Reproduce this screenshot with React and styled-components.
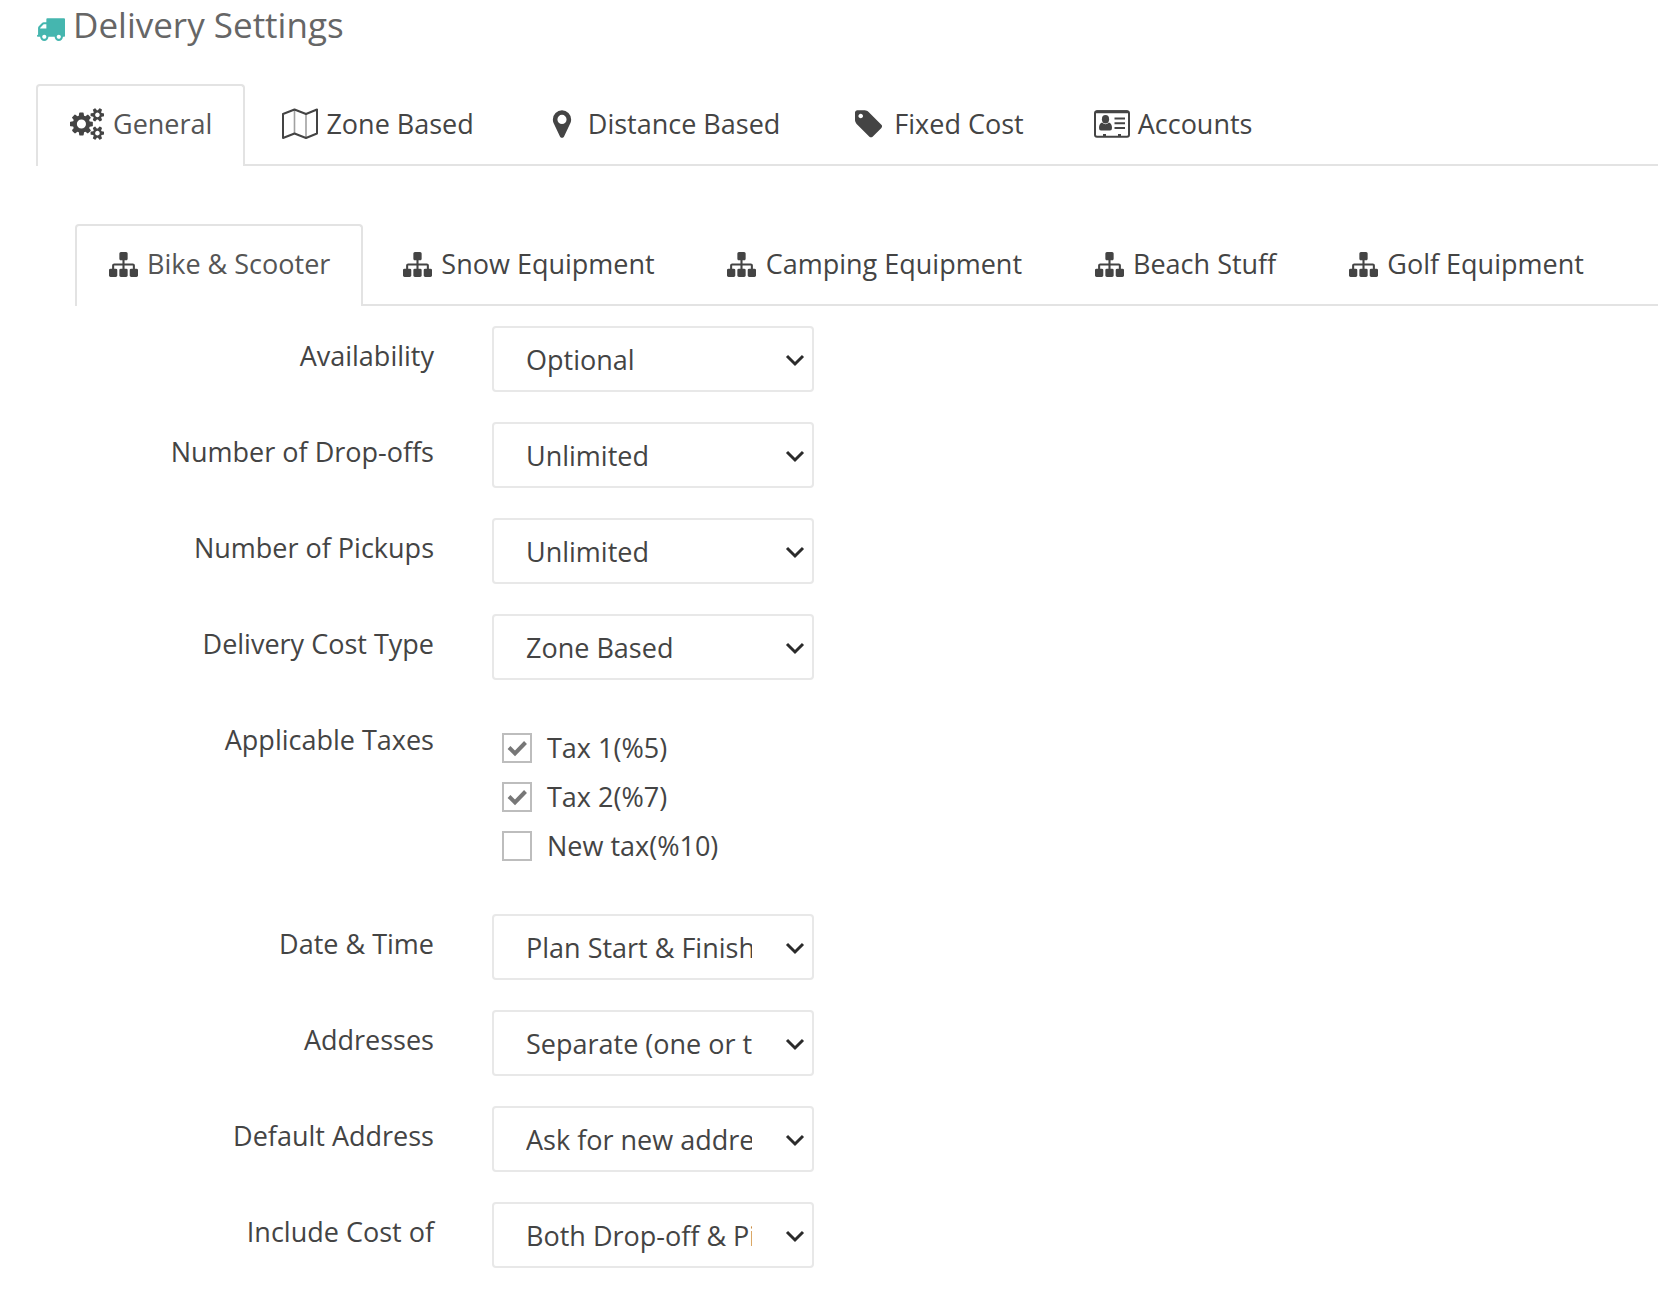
import React, { useState } from "react";
import styled, { createGlobalStyle } from "styled-components";

const theme = {
  teal: "#45b6af",
  title: "#666",
  text: "#444",
  active: "#555",
  line: "#e3e3e3",
  input: "#e8e8e8",
  check: "#bdbdbd"
};

const GlobalStyle = createGlobalStyle`
  * {
    box-sizing: border-box;
  }
  body {
    margin: 0;
    background: #fff;
    color: ${theme.text};
    font-family: "Open Sans", "Noto Sans", sans-serif;
    font-size: 27px;
    line-height: 40px;
  }
`;

const Page = styled.main`
  padding: 0 0 44px 36px;
  overflow-x: hidden;
`;

const Title = styled.h1`
  display: flex;
  align-items: center;
  gap: 8px;
  margin: 0 0 34px;
  color: ${theme.title};
  font-size: 35px;
  font-weight: 400;
  line-height: 50px;
`;

const TitleIcon = styled.svg`
  width: 29px;
  height: 29px;
  margin-top: 6px;
  fill: ${theme.teal};
`;

const TabList = styled.div`
  display: flex;
  gap: ${props => (props.$wide ? 4 : 6)}px;
  border-bottom: 2px solid ${theme.line};
`;

const Tab = styled.button`
  display: flex;
  align-items: center;
  gap: ${props => (props.$wide ? 8 : 9)}px;
  flex: none;
  height: 82px;
  margin: 0 0 -2px;
  padding: 0 31px 5px;
  border: 2px solid ${props => (props.$active ? theme.line : "transparent")};
  border-bottom: 0;
  border-radius: 4px 4px 0 0;
  background: ${props => (props.$active ? "#fff" : "transparent")};
  color: ${props => (props.$active ? theme.active : theme.text)};
  font: inherit;
  white-space: nowrap;
  cursor: pointer;
`;

const IconSlot = styled.span`
  display: flex;
  justify-content: center;
  width: ${props => (props.$wide ? 36 : 30)}px;
  padding-top: ${props => (props.$wide ? 0 : 2)}px;

  svg {
    height: ${props => (props.$wide ? 32 : 29)}px;
  }
`;

const Glyph = styled.svg`
  flex: none;
  fill: ${theme.text};
`;

const Panel = styled.section`
  padding: 58px 0 0 39px;
`;

const Form = styled.form`
  display: grid;
  gap: 30px;
  padding-top: 20px;
`;

const Row = styled.div`
  display: grid;
  grid-template-columns: 359px 322px;
  column-gap: 58px;
  align-items: start;
`;

const Label = styled.label`
  padding-top: 10px;
  text-align: right;
`;

const SelectBox = styled.div`
  position: relative;
`;

const Select = styled.select`
  appearance: none;
  display: block;
  width: 100%;
  height: 66px;
  padding: 2px 60px 0 32px;
  border: 2px solid ${theme.input};
  border-radius: 4px;
  background: #fff;
  color: ${theme.text};
  font: inherit;
`;

const Chevron = styled.svg`
  position: absolute;
  top: 27px;
  right: 9px;
  width: 20px;
  height: 14px;
  fill: none;
  stroke: #2b2b2b;
  stroke-width: 3;
  pointer-events: none;
`;

const Checks = styled.div`
  display: grid;
  gap: 9px;
  height: 174px;
  align-content: start;
  padding: 18px 0 0 10px;
`;

const CheckLabel = styled.label`
  display: flex;
  align-items: center;
  gap: 15px;
`;

const CheckBox = styled.span`
  position: relative;
  display: flex;
`;

const Checkbox = styled.input`
  appearance: none;
  width: 30px;
  height: 30px;
  margin: 0;
  border: 2px solid ${theme.check};
  background: #fff;

  & + svg {
    display: none;
  }
  &:checked + svg {
    display: block;
  }
`;

const Tick = styled.svg`
  position: absolute;
  inset: 0;
  width: 30px;
  height: 30px;
  fill: none;
  stroke: #777;
  stroke-width: 4;
  pointer-events: none;
`;

const CogsIcon = () => (
  <Glyph viewBox="0 0 1920 1792" aria-hidden="true">
    <path d="M896 896q0-106-75-181t-181-75-181 75-75 181 75 181 181 75 181-75 75-181zm768 512q0-52-38-90t-90-38-90 38-38 90q0 53 37.5 90.5t90.5 37.5 90.5-37.5 37.5-90.5zm0-1024q0-52-38-90t-90-38-90 38-38 90q0 53 37.5 90.5t90.5 37.5 90.5-37.5 37.5-90.5zm-384 421v185q0 10-7 19.5t-16 10.5l-155 24q-11 35-32 76 34 48 90 115 7 11 7 20 0 12-7 19-23 30-82.5 89.5t-78.5 59.5q-11 0-21-7l-115-90q-37 19-77 31-11 108-23 155-7 24-30 24h-186q-11 0-20-7.5t-10-17.5l-23-153q-34-10-75-31l-118 89q-7 7-20 7-11 0-21-8-144-133-144-160 0-9 7-19 10-14 41-53t47-61q-23-44-35-82l-152-24q-10-1-17-9.5t-7-19.5v-185q0-10 7-19.5t16-10.5l155-24q11-35 32-76-34-48-90-115-7-11-7-20 0-12 7-20 22-30 82-89t79-59q11 0 21 7l115 90q34-18 77-32 11-108 23-154 7-24 30-24h186q11 0 20 7.5t10 17.5l23 153q34 10 75 31l118-89q8-7 20-7 11 0 21 8 144 133 144 160 0 8-7 19-12 16-42 54t-45 60q23 48 34 82l152 23q10 2 17 10.5t7 19.5zm640 533v140q0 16-149 31-12 27-30 52 51 113 51 138 0 4-4 7-122 71-124 71-8 0-46-47t-52-68q-20 2-30 2t-30-2q-14 21-52 68t-46 47q-2 0-124-71-4-3-4-7 0-25 51-138-18-25-30-52-149-15-149-31v-140q0-16 149-31 13-29 30-52-51-113-51-138 0-4 4-7 4-2 35-20t59-34 30-16q8 0 46 46.5t52 67.5q20-2 30-2t30 2q51-71 92-112l6-2q4 0 124 70 4 3 4 7 0 25-51 138 17 23 30 52 149 15 149 31zm0-1024v140q0 16-149 31-12 27-30 52 51 113 51 138 0 4-4 7-122 71-124 71-8 0-46-47t-52-68q-20 2-30 2t-30-2q-14 21-52 68t-46 47q-2 0-124-71-4-3-4-7 0-25 51-138-18-25-30-52-149-15-149-31v-140q0-16 149-31 13-29 30-52-51-113-51-138 0-4 4-7 4-2 35-20t59-34 30-16q8 0 46 46.5t52 67.5q20-2 30-2t30 2q51-71 92-112l6-2q4 0 124 70 4 3 4 7 0 25-51 138 17 23 30 52 149 15 149 31z" />
  </Glyph>
);

const MapIcon = () => (
  <Glyph viewBox="0 0 36 32" aria-hidden="true">
    <path
      d="M1 6 12.500 1.500 24 6 35 1.500V25.500L24 30 12.500 25.500 1 30z"
      fill="none"
      stroke={theme.text}
      strokeWidth="2"
      strokeLinejoin="round"
    />
    <path d="M12.500 2V25M24 6V29" stroke={theme.text} strokeOpacity=".5" strokeWidth="1.6" />
  </Glyph>
);

const MarkerIcon = () => (
  <Glyph viewBox="0 0 1792 1792" aria-hidden="true">
    <path d="M1152 640q0-106-75-181t-181-75-181 75-75 181 75 181 181 75 181-75 75-181zm256 0q0 109-33 179l-364 774q-16 33-47.5 52t-67.5 19-67.5-19-46.5-52l-365-774q-33-70-33-179 0-212 150-362t362-150 362 150 150 362z" />
  </Glyph>
);

const TagIcon = () => (
  <Glyph viewBox="128 0 1536 1792" aria-hidden="true">
    <path d="M576 448q0-53-37.500-90.500t-90.500-37.500-90.500 37.500-37.500 90.500 37.500 90.500 90.500 37.500 90.500-37.500 37.500-90.500zm1067 576q0 53-37 90l-491 492q-39 37-91 37-53 0-90-37l-715-716q-38-37-64.500-101t-26.500-117v-416q0-52 38-90t90-38h416q53 0 117 26.500t102 64.500l715 714q37 39 37 91z" />
  </Glyph>
);

const CardIcon = () => (
  <Glyph viewBox="0 -2 36 32" aria-hidden="true">
    <rect x="1" y="1.2" width="34" height="25.600" rx="2" fill="none" stroke={theme.text} strokeWidth="2" />
    <path d="M1 3Q1 .3 3 .3H33Q35 .3 35 3V3.200H1zM9 24h3v3H9zM24 24h3v3h-3z" />
    <ellipse cx="11.500" cy="9.300" rx="3.600" ry="4.200" />
    <path d="M8 12.500Q11.500 16 15 12.500 18 13.500 18 18 18 20.500 16 20.500H7Q5 20.500 5 18 5 13.500 8 12.500z" />
    <path d="M20.500 8.500h10.500M20.500 13.200h10.500M20.500 18h10.500" stroke={theme.text} strokeWidth="2" />
  </Glyph>
);

const SitemapIcon = () => (
  <Glyph viewBox="0 0 1792 1792" aria-hidden="true">
    <path d="M1792 1248v320q0 40-28 68t-68 28h-320q-40 0-68-28t-28-68v-320q0-40 28-68t68-28h96v-192h-512v192h96q40 0 68 28t28 68v320q0 40-28 68t-68 28h-320q-40 0-68-28t-28-68v-320q0-40 28-68t68-28h96v-192h-512v192h96q40 0 68 28t28 68v320q0 40-28 68t-68 28h-320q-40 0-68-28t-28-68v-320q0-40 28-68t68-28h96v-192q0-52 38-90t90-38h512v-192h-96q-40 0-68-28t-28-68v-320q0-40 28-68t68-28h320q40 0 68 28t28 68v320q0 40-28 68t-68 28h-96v192h512q52 0 90 38t38 90v192h96q40 0 68 28t28 68z" />
  </Glyph>
);

const SECTIONS = [
  { name: "General", Icon: CogsIcon },
  { name: "Zone Based", Icon: MapIcon },
  { name: "Distance Based", Icon: MarkerIcon },
  { name: "Fixed Cost", Icon: TagIcon },
  { name: "Accounts", Icon: CardIcon }
];

const CATEGORIES = [
  "Bike & Scooter",
  "Snow Equipment",
  "Camping Equipment",
  "Beach Stuff",
  "Golf Equipment"
].map(name => ({ name, Icon: SitemapIcon }));

const TAXES = [
  { id: "tax1", name: "Tax 1(%5)", checked: true },
  { id: "tax2", name: "Tax 2(%7)", checked: true },
  { id: "tax3", name: "New tax(%10)", checked: false }
];

function Tabs({ label, items, wide }) {
  const [active, setActive] = useState(items[0].name);
  return (
    <TabList role="tablist" aria-label={label} $wide={wide}>
      {items.map(({ name, Icon }) => (
        <Tab
          key={name}
          type="button"
          role="tab"
          aria-selected={active === name}
          $active={active === name}
          $wide={wide}
          onClick={() => setActive(name)}
        >
          <IconSlot $wide={wide}>
            <Icon />
          </IconSlot>
          {name}
        </Tab>
      ))}
    </TabList>
  );
}

function SelectRow({ id, label, options }) {
  return (
    <Row>
      <Label htmlFor={id}>{label}</Label>
      <SelectBox>
        <Select id={id}>
          {options.map(option => (
            <option key={option}>{option}</option>
          ))}
        </Select>
        <Chevron viewBox="0 0 20 14" aria-hidden="true">
          <path d="M2 3 10 11 18 3" />
        </Chevron>
      </SelectBox>
    </Row>
  );
}

function App() {
  return (
    <>
      <GlobalStyle />
      <Page>
        <Title>
          <TitleIcon viewBox="0 0 1792 1792" aria-hidden="true">
            <path d="M640 1408q0-52-38-90t-90-38-90 38-38 90 38 90 90 38 90-38 38-90zm-384-512h384v-256h-158q-13 0-22 9l-195 195q-9 9-9 22v30zm1280 512q0-52-38-90t-90-38-90 38-38 90 38 90 90 38 90-38 38-90zm256-1088v1024q0 15-4 26.5t-13.5 18.5-16.5 11.5-23.5 6-22.5 2-25.5 0-22.5-.5q0 106-75 181t-181 75-181-75-75-181h-384q0 106-75 181t-181 75-181-75-75-181h-64q-3 0-22.5.5t-25.5 0-22.5-2-23.5-6-16.5-11.5-13.5-18.5-4-26.5q0-26 19-45t45-19v-320q0-8-.5-35t0-38 2.5-34.5 6.5-37 14-30.5 22.5-30l198-198q19-19 50.5-32t58.5-13h160v-192q0-26 19-45t45-19h1024q26 0 45 19t19 45z" />
          </TitleIcon>
          Delivery Settings
        </Title>
        <Tabs label="Delivery Settings" items={SECTIONS} wide />
        <Panel>
          <Tabs label="General" items={CATEGORIES} />
          <Form>
            <SelectRow id="availability" label="Availability" options={["Optional", "Required"]} />
            <SelectRow id="dropoffs" label="Number of Drop-offs" options={["Unlimited", "1", "2"]} />
            <SelectRow id="pickups" label="Number of Pickups" options={["Unlimited", "1", "2"]} />
            <SelectRow
              id="costType"
              label="Delivery Cost Type"
              options={["Zone Based", "Distance Based", "Fixed Cost"]}
            />
            <Row role="group" aria-labelledby="taxes">
              <Label as="span" id="taxes">Applicable Taxes</Label>
              <Checks>
                {TAXES.map(tax => (
                  <CheckLabel key={tax.id} htmlFor={tax.id}>
                    <CheckBox>
                      <Checkbox id={tax.id} type="checkbox" defaultChecked={tax.checked} />
                      <Tick viewBox="0 0 30 30" aria-hidden="true">
                        <path d="M7 14.500 13 20.500 23.500 9.500" />
                      </Tick>
                    </CheckBox>
                    {tax.name}
                  </CheckLabel>
                ))}
              </Checks>
            </Row>
            <SelectRow id="dateTime" label="Date & Time" options={["Plan Start & Finish", "Custom"]} />
            <SelectRow id="addresses" label="Addresses" options={["Separate (one or two)", "Same"]} />
            <SelectRow
              id="defaultAddress"
              label="Default Address"
              options={["Ask for new address", "Store address"]}
            />
            <SelectRow
              id="includeCost"
              label="Include Cost of"
              options={["Both Drop-off & Pickup", "Drop-off", "Pickup"]}
            />
          </Form>
        </Panel>
      </Page>
    </>
  );
}

export default App;
